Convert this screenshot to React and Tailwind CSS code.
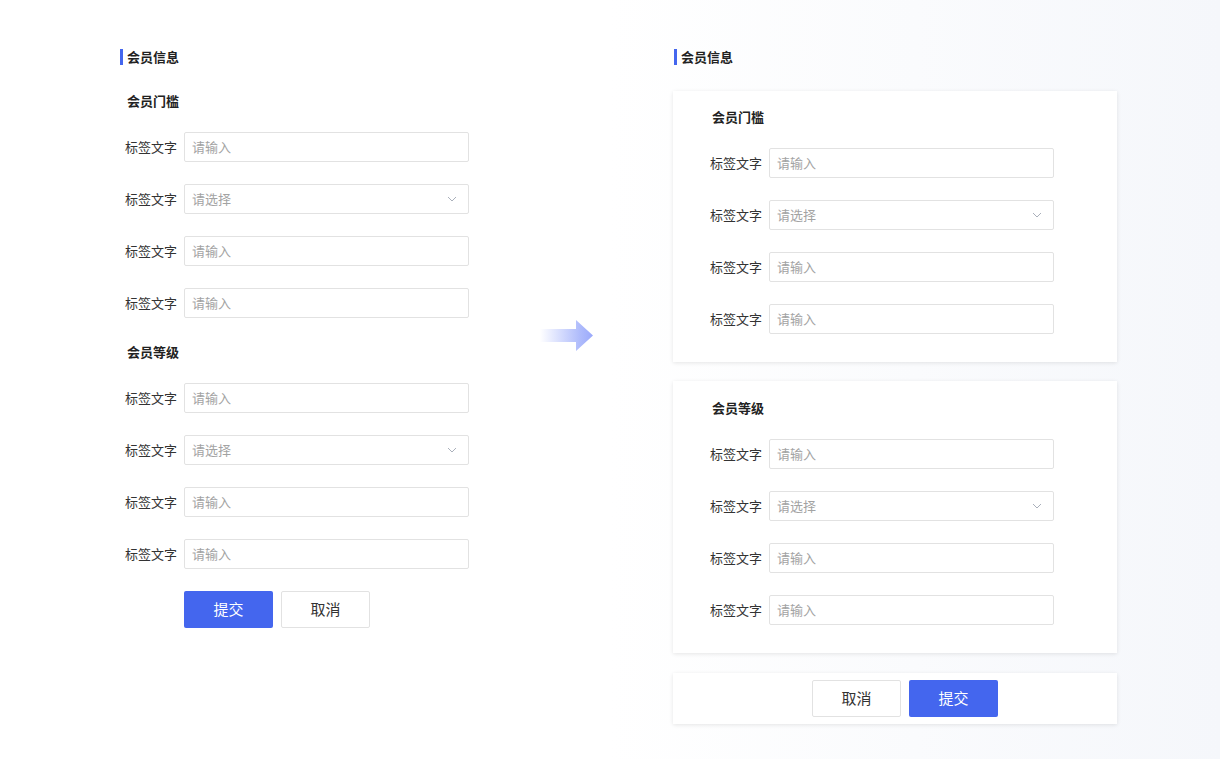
import React from "react";

const FONT = { fontFamily: '"Noto Sans CJK SC", "Noto Sans", sans-serif' };

function Chevron() {
  return (
    <svg width="10" height="6" viewBox="0 0 10 6" fill="none" className="text-[#aab0bb]">
      <path d="M1 1l4 4 4-4" stroke="currentColor" strokeWidth="1" />
    </svg>
  );
}

function Row({ select, placeholder }) {
  return (
    <div className="flex items-center h-[30px]">
      <span className="w-[59px] text-[13px] text-[#333] leading-none pb-[2px]">标签文字</span>
      <div className="w-[285px] h-[30px] border border-[#e2e2e2] rounded-[2px] bg-white flex items-center justify-between pl-[7px] pr-[11px]">
        <span className="text-[13px] text-[#a3a3a3] leading-none pb-[2px]">{placeholder}</span>
        {select && <Chevron />}
      </div>
    </div>
  );
}

function Rows() {
  return (
    <div className="flex flex-col gap-[22px]">
      <Row placeholder="请输入" />
      <Row select placeholder="请选择" />
      <Row placeholder="请输入" />
      <Row placeholder="请输入" />
    </div>
  );
}

function Title() {
  return (
    <div className="flex items-center h-[16px]">
      <div className="w-[3px] h-[16px] bg-[#4466ee]" />
      <span className="ml-[4px] text-[13px] font-bold text-[#222] leading-none pb-[2px]">会员信息</span>
    </div>
  );
}

function SubTitle({ children }) {
  return <div className="h-[16px] flex items-center text-[13px] font-bold text-[#222] leading-none pb-[2px]">{children}</div>;
}

function PrimaryBtn() {
  return (
    <button className="w-[89px] h-[37px] rounded-[2px] bg-[#4466ee] text-white text-[15px] flex items-center justify-center">
      提交
    </button>
  );
}
function GhostBtn() {
  return (
    <button className="w-[89px] h-[37px] rounded-[2px] bg-white border border-[#e2e2e2] text-[#333] text-[15px] flex items-center justify-center">
      取消
    </button>
  );
}

export default function App() {
  return (
    <div
      style={FONT}
      className="w-[1220px] h-[759px] overflow-hidden flex bg-[linear-gradient(90deg,#ffffff_0%,#ffffff_50%,#f5f7fb_100%)]"
    >
      {/* Left */}
      <div className="w-[420px] ml-[120px] pt-[49px] flex flex-col">
        <Title />
        <div className="mt-[28px] pl-[7px]">
          <SubTitle>会员门槛</SubTitle>
        </div>
        <div className="mt-[23px] pl-[5px]">
          <Rows />
        </div>
        <div className="mt-[26px] pl-[7px]">
          <SubTitle>会员等级</SubTitle>
        </div>
        <div className="mt-[23px] pl-[5px]">
          <Rows />
        </div>
        <div className="mt-[22px] pl-[64px] flex gap-[8px]">
          <PrimaryBtn />
          <GhostBtn />
        </div>
      </div>

      {/* Arrow */}
      <div className="w-[133px] pt-[320px]">
        <svg width="56" height="32" viewBox="0 0 56 32">
          <defs>
            <linearGradient id="ag" x1="0" x2="1" y1="0" y2="0">
              <stop offset="0" stopColor="#a6b4fb" stopOpacity="0" />
              <stop offset="0.75" stopColor="#a6b4fb" stopOpacity="0.9" />
              <stop offset="1" stopColor="#9aa9fb" />
            </linearGradient>
          </defs>
          <path d="M0 9h36V0l17 15.5L36 31V22H0z" fill="url(#ag)" />
        </svg>
      </div>

      {/* Right */}
      <div className="pt-[49px] flex flex-col">
        <div className="pl-[1px]">
          <Title />
        </div>
        <div className="mt-[26px] w-[444px] bg-white shadow-[0_1px_4px_rgba(0,0,0,0.1)] pt-[18px] pb-[28px] pl-[37px]">
          <div className="pl-[2px]">
            <SubTitle>会员门槛</SubTitle>
          </div>
          <div className="mt-[23px]">
            <Rows />
          </div>
        </div>
        <div className="mt-[19px] w-[444px] bg-white shadow-[0_1px_4px_rgba(0,0,0,0.1)] pt-[19px] pb-[28px] pl-[37px]">
          <div className="pl-[2px]">
            <SubTitle>会员等级</SubTitle>
          </div>
          <div className="mt-[23px]">
            <Rows />
          </div>
        </div>
        <div className="mt-[20px] w-[444px] h-[51px] bg-white shadow-[0_1px_4px_rgba(0,0,0,0.1)] pt-[7px] pl-[139px] flex gap-[8px]">
          <GhostBtn />
          <PrimaryBtn />
        </div>
      </div>
    </div>
  );
}
